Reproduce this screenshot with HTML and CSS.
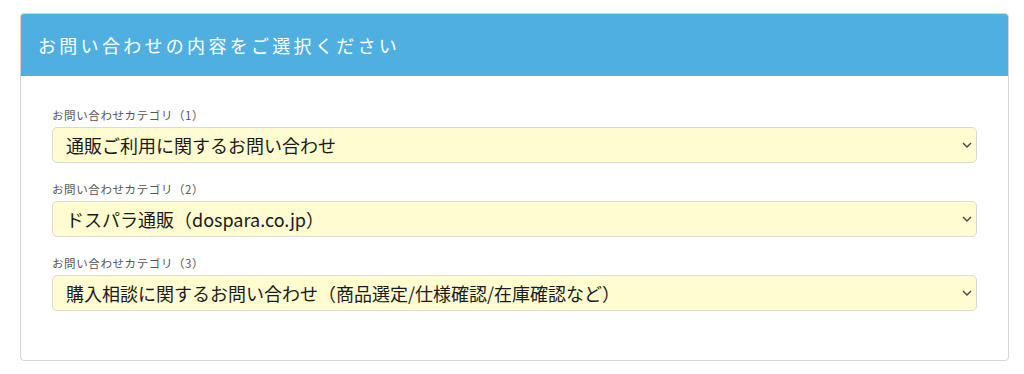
FILE: index.html
```html
<!DOCTYPE html>
<html lang="ja">
<head>
    <meta charset="UTF-8">
    <meta name="viewport" content="width=device-width, initial-scale=1.0">
    <title>お問い合わせ</title>
    <link rel="stylesheet" href="styles.css">
</head>
<body>
    <div class="panel">
        <h2 class="panel-head">お問い合わせの内容をご選択ください</h2>
        <form class="panel-body" id="inquiryForm">
            <div class="field">
                <label for="cat1">お問い合わせカテゴリ（1）</label>
                <div class="select-wrap">
                    <select id="cat1" name="cat1">
                        <option>通販ご利用に関するお問い合わせ</option>
                    </select>
                    <svg class="chevron" viewBox="0 0 10 6" width="10" height="6"><path d="M1 1l4 4 4-4" fill="none" stroke="#444" stroke-width="1.4"/></svg>
                </div>
            </div>
            <div class="field">
                <label for="cat2">お問い合わせカテゴリ（2）</label>
                <div class="select-wrap">
                    <select id="cat2" name="cat2">
                        <option>ドスパラ通販（dospara.co.jp）</option>
                    </select>
                    <svg class="chevron" viewBox="0 0 10 6" width="10" height="6"><path d="M1 1l4 4 4-4" fill="none" stroke="#444" stroke-width="1.4"/></svg>
                </div>
            </div>
            <div class="field">
                <label for="cat3">お問い合わせカテゴリ（3）</label>
                <div class="select-wrap">
                    <select id="cat3" name="cat3">
                        <option>購入相談に関するお問い合わせ（商品選定/仕様確認/在庫確認など）</option>
                    </select>
                    <svg class="chevron" viewBox="0 0 10 6" width="10" height="6"><path d="M1 1l4 4 4-4" fill="none" stroke="#444" stroke-width="1.4"/></svg>
                </div>
            </div>
        </form>
    </div>
</body>
</html>
```

FILE: styles.css
```css
body {
    margin: 0;
    padding: 13px 15px 0 20px;
    font-family: "Noto Sans CJK JP", "Noto Sans", sans-serif;
    background-color: #fff;
    color: #222;
}
.panel {
    border: 1px solid #d4d4d4;
    border-radius: 4px;
    overflow: hidden;
    height: 348px;
    box-sizing: border-box;
}
.panel-head {
    margin: 0;
    height: 62px;
    display: flex;
    align-items: center;
    padding: 0 17px;
    background-color: #50afe1;
    color: #fff;
    font-size: 18px;
    font-weight: 400;
    letter-spacing: 3.3px;
}
.panel-body {
    padding: 31px 31px 0 31px;
    display: flex;
    flex-direction: column;
    gap: 18px;
}
.field label {
    display: block;
    font-size: 11.5px;
    line-height: 16px;
    letter-spacing: 0.6px;
    color: #555;
    margin-bottom: 4px;
}
.select-wrap {
    position: relative;
}
.select-wrap select {
    display: block;
    width: 100%;
    height: 36px;
    padding: 0 30px 0 13px;
    border: 1px solid #d8d8d8;
    border-radius: 5px;
    background-color: #fffcd0;
    color: #1a1a1a;
    font-family: inherit;
    font-size: 18px;
    appearance: none;
    -webkit-appearance: none;
    outline: none;
}
.chevron {
    position: absolute;
    right: 5px;
    top: 15px;
    pointer-events: none;
}
```
